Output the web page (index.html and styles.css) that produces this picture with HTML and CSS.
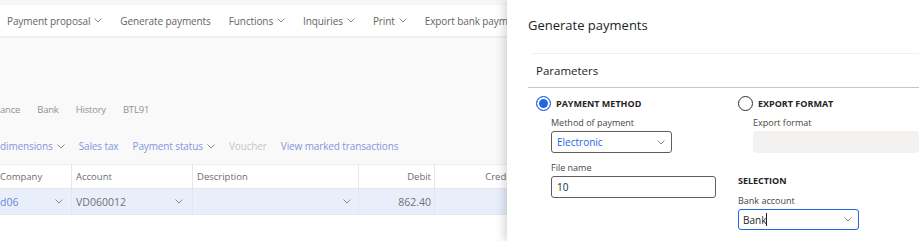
FILE: index.html
```html
<!DOCTYPE html>
<html>
<head>
  <meta charset="UTF-8" />
  <title>Generate payments</title>
  <link rel="stylesheet" href="styles.css">
</head>
<body>
  <div class="page">
    <div class="top-strip"></div>
    <ul class="toolbar">
      <li>Payment proposal <svg class="chev" viewBox="0 0 8 5"><path d="M0.5 0.5 L4 4 L7.5 0.5"/></svg></li>
      <li>Generate payments</li>
      <li>Functions <svg class="chev" viewBox="0 0 8 5"><path d="M0.5 0.5 L4 4 L7.5 0.5"/></svg></li>
      <li>Inquiries <svg class="chev" viewBox="0 0 8 5"><path d="M0.5 0.5 L4 4 L7.5 0.5"/></svg></li>
      <li>Print <svg class="chev" viewBox="0 0 8 5"><path d="M0.5 0.5 L4 4 L7.5 0.5"/></svg></li>
      <li>Export bank payments</li>
    </ul>

    <ul class="tabs">
      <li class="cut">ance</li>
      <li>Bank</li>
      <li>History</li>
      <li>BTL91</li>
    </ul>

    <ul class="actions">
      <li class="cut">dimensions <svg class="chev" viewBox="0 0 8 5"><path d="M0.5 0.5 L4 4 L7.5 0.5"/></svg></li>
      <li>Sales tax</li>
      <li>Payment status <svg class="chev" viewBox="0 0 8 5"><path d="M0.5 0.5 L4 4 L7.5 0.5"/></svg></li>
      <li class="disabled">Voucher</li>
      <li>View marked transactions</li>
    </ul>

    <div class="grid">
      <div class="grid-row head">
        <div class="cell c1">Company</div>
        <div class="cell c2">Account</div>
        <div class="cell c3">Description</div>
        <div class="cell c4 num">Debit</div>
        <div class="cell c5 num">Credit</div>
      </div>
      <div class="grid-row sel">
        <div class="cell c1 link">d06 <svg class="chev" viewBox="0 0 8 5"><path d="M0.5 0.5 L4 4 L7.5 0.5"/></svg></div>
        <div class="cell c2">VD060012 <svg class="chev" viewBox="0 0 8 5"><path d="M0.5 0.5 L4 4 L7.5 0.5"/></svg></div>
        <div class="cell c3"><span></span><svg class="chev" viewBox="0 0 8 5"><path d="M0.5 0.5 L4 4 L7.5 0.5"/></svg></div>
        <div class="cell c4 num">862.40</div>
        <div class="cell c5 num"></div>
      </div>
    </div>
  </div>

  <div class="panel">
    <h1 class="panel-title">Generate payments</h1>
    <div class="faint-line"></div>
    <h2 class="section-head">Parameters</h2>

    <div class="fields">
      <div class="col left-col">
        <div class="radio-row"><span class="radio checked"></span>PAYMENT METHOD</div>
        <div class="field">
          <label class="field-label">Method of payment</label>
          <div class="select w121 blue-text">Electronic <svg class="chev" viewBox="0 0 8 5"><path d="M0.5 0.5 L4 4 L7.5 0.5"/></svg></div>
        </div>
        <div class="field gap8">
          <label class="field-label">File name</label>
          <div class="input w165">10</div>
        </div>
      </div>

      <div class="col right-col">
        <div class="radio-row"><span class="radio"></span>EXPORT FORMAT</div>
        <div class="field">
          <label class="field-label">Export format</label>
          <div class="input disabled-field"></div>
        </div>
        <div class="group-head">SELECTION</div>
        <div class="field outdent">
          <label class="field-label">Bank account</label>
          <div class="select w121 focused">Bank<span class="caret"></span> <svg class="chev" viewBox="0 0 8 5"><path d="M0.5 0.5 L4 4 L7.5 0.5"/></svg></div>
        </div>
      </div>
    </div>
  </div>
</body>
</html>
```

FILE: styles.css
```css
* {
  margin: 0;
  padding: 0;
  box-sizing: border-box;
}
body {
  width: 919px;
  height: 241px;
  overflow: hidden;
  display: flex;
  font-family: "Open Sans", "Noto Sans", sans-serif;
  background: white;
  white-space: nowrap;
}
ul {
  list-style: none;
}
.chev {
  width: 8px;
  height: 5px;
  fill: none;
  stroke: #8a8886;
  stroke-width: 1;
}

/* page behind the panel */
.page {
  width: 507px;
  flex: none;
  background: #f9f9f9;
  overflow: hidden;
}
.top-strip {
  height: 5px;
  background: #f6f6f6;
}
.toolbar {
  height: 31px;
  background: white;
  box-shadow: 0 1px 2px rgba(0, 0, 0, 0.08);
  display: flex;
  align-items: center;
  gap: 18px;
  padding-left: 7px;
  font-size: 10px;
  letter-spacing: -0.1px;
  color: #66645f;
}
.toolbar li {
  display: flex;
  align-items: center;
  gap: 4px;
}
.tabs {
  display: flex;
  gap: 17px;
  margin-top: 66px;
  height: 14px;
  align-items: center;
  font-size: 9.5px;
  letter-spacing: -0.2px;
  color: #939190;
}
.actions {
  display: flex;
  align-items: center;
  gap: 14px;
  margin-top: 23px;
  height: 14px;
  font-size: 10px;
  letter-spacing: -0.12px;
  color: #8596dd;
}
.actions li {
  display: flex;
  align-items: center;
  gap: 4px;
}
.actions .disabled {
  color: #c6c6c6;
}
.grid {
  margin-top: 11px;
  background: white;
  border-top: 1px solid #ececec;
  height: 200px;
  font-size: 9.5px;
}
.grid-row {
  display: flex;
  border-bottom: 1px solid #e6e6e6;
}
.grid-row.head {
  height: 24px;
  color: #6e6c6a;
}
.grid-row.sel {
  height: 26px;
  background: #e8effb;
  color: #737170;
  font-size: 10.5px;
}
.cell {
  display: flex;
  align-items: center;
  justify-content: space-between;
  padding: 0 8px 0 4px;
  border-right: 1px solid #e6e6e6;
  flex: none;
}
.c1 {
  width: 72px;
  padding-left: 0;
}
.c2 {
  width: 121px;
  padding-right: 9px;
}
.c3 {
  width: 166px;
  padding-right: 7px;
}
.c4 {
  width: 76px;
}
.c5 {
  width: 80px;
  border-right: none;
}
.num {
  justify-content: flex-end;
  padding-right: 3px;
}
.cell.link {
  color: #6d85d6;
}

/* side panel */
.panel {
  flex: 1;
  position: relative;
  z-index: 1;
  background: white;
  box-shadow: -3px 0 9px rgba(0, 0, 0, 0.16);
  padding-left: 21px;
  color: #323130;
}
.panel-title {
  font-size: 13px;
  font-weight: 400;
  line-height: 20px;
  padding-top: 15px;
  height: 53px;
  color: #201f1e;
}
.faint-line {
  margin-left: 4px;
  border-top: 1px solid #f1f1f1;
}
.section-head {
  font-size: 11.5px;
  font-weight: 400;
  height: 34px;
  line-height: 33px;
  padding-left: 8px;
  border-bottom: 1px solid #c8c6c4;
  color: #252423;
}
.fields {
  display: flex;
  padding-left: 8px;
}
.col {
  display: flex;
  flex-direction: column;
}
.left-col {
  width: 202px;
}
.right-col {
  flex: 1;
}
.radio-row {
  display: flex;
  align-items: center;
  gap: 5px;
  margin-top: 8px;
  height: 15px;
  font-size: 9px;
  font-weight: 700;
  color: #252423;
}
.radio {
  width: 15px;
  height: 15px;
  border-radius: 50%;
  border: 1px solid #323130;
  background: white;
}
.radio.checked {
  border: 1.5px solid #2266e3;
  box-shadow: inset 0 0 0 2px white;
  background: #2266e3;
}
.field {
  display: flex;
  flex-direction: column;
  margin-left: 15px;
  margin-top: 5px;
}
.field.gap8 {
  margin-top: 8px;
}
.field.outdent {
  margin-left: 0;
  margin-top: 6px;
}
.field-label {
  font-size: 9px;
  line-height: 14px;
  height: 15px;
  color: #484644;
}
.select, .input {
  height: 22px;
  border: 1px solid #605e5c;
  border-radius: 3px;
  font-size: 10px;
  padding: 0 6px 0 5px;
  display: flex;
  align-items: center;
  color: #201f1e;
}
.select {
  justify-content: space-between;
}
.w121 {
  width: 121px;
}
.w165 {
  width: 165px;
}
.blue-text {
  color: #2266e3;
}
.select.focused {
  border-color: #2266e3;
  height: 21px;
  padding-left: 4px;
}
.caret {
  width: 1px;
  height: 13px;
  background: #201f1e;
  margin-right: auto;
}
.disabled-field {
  border: none;
  background: #f3f2f1;
  border-radius: 3px;
}
.group-head {
  margin-top: 21px;
  font-size: 9px;
  font-weight: 700;
  line-height: 14px;
  color: #252423;
}
```
